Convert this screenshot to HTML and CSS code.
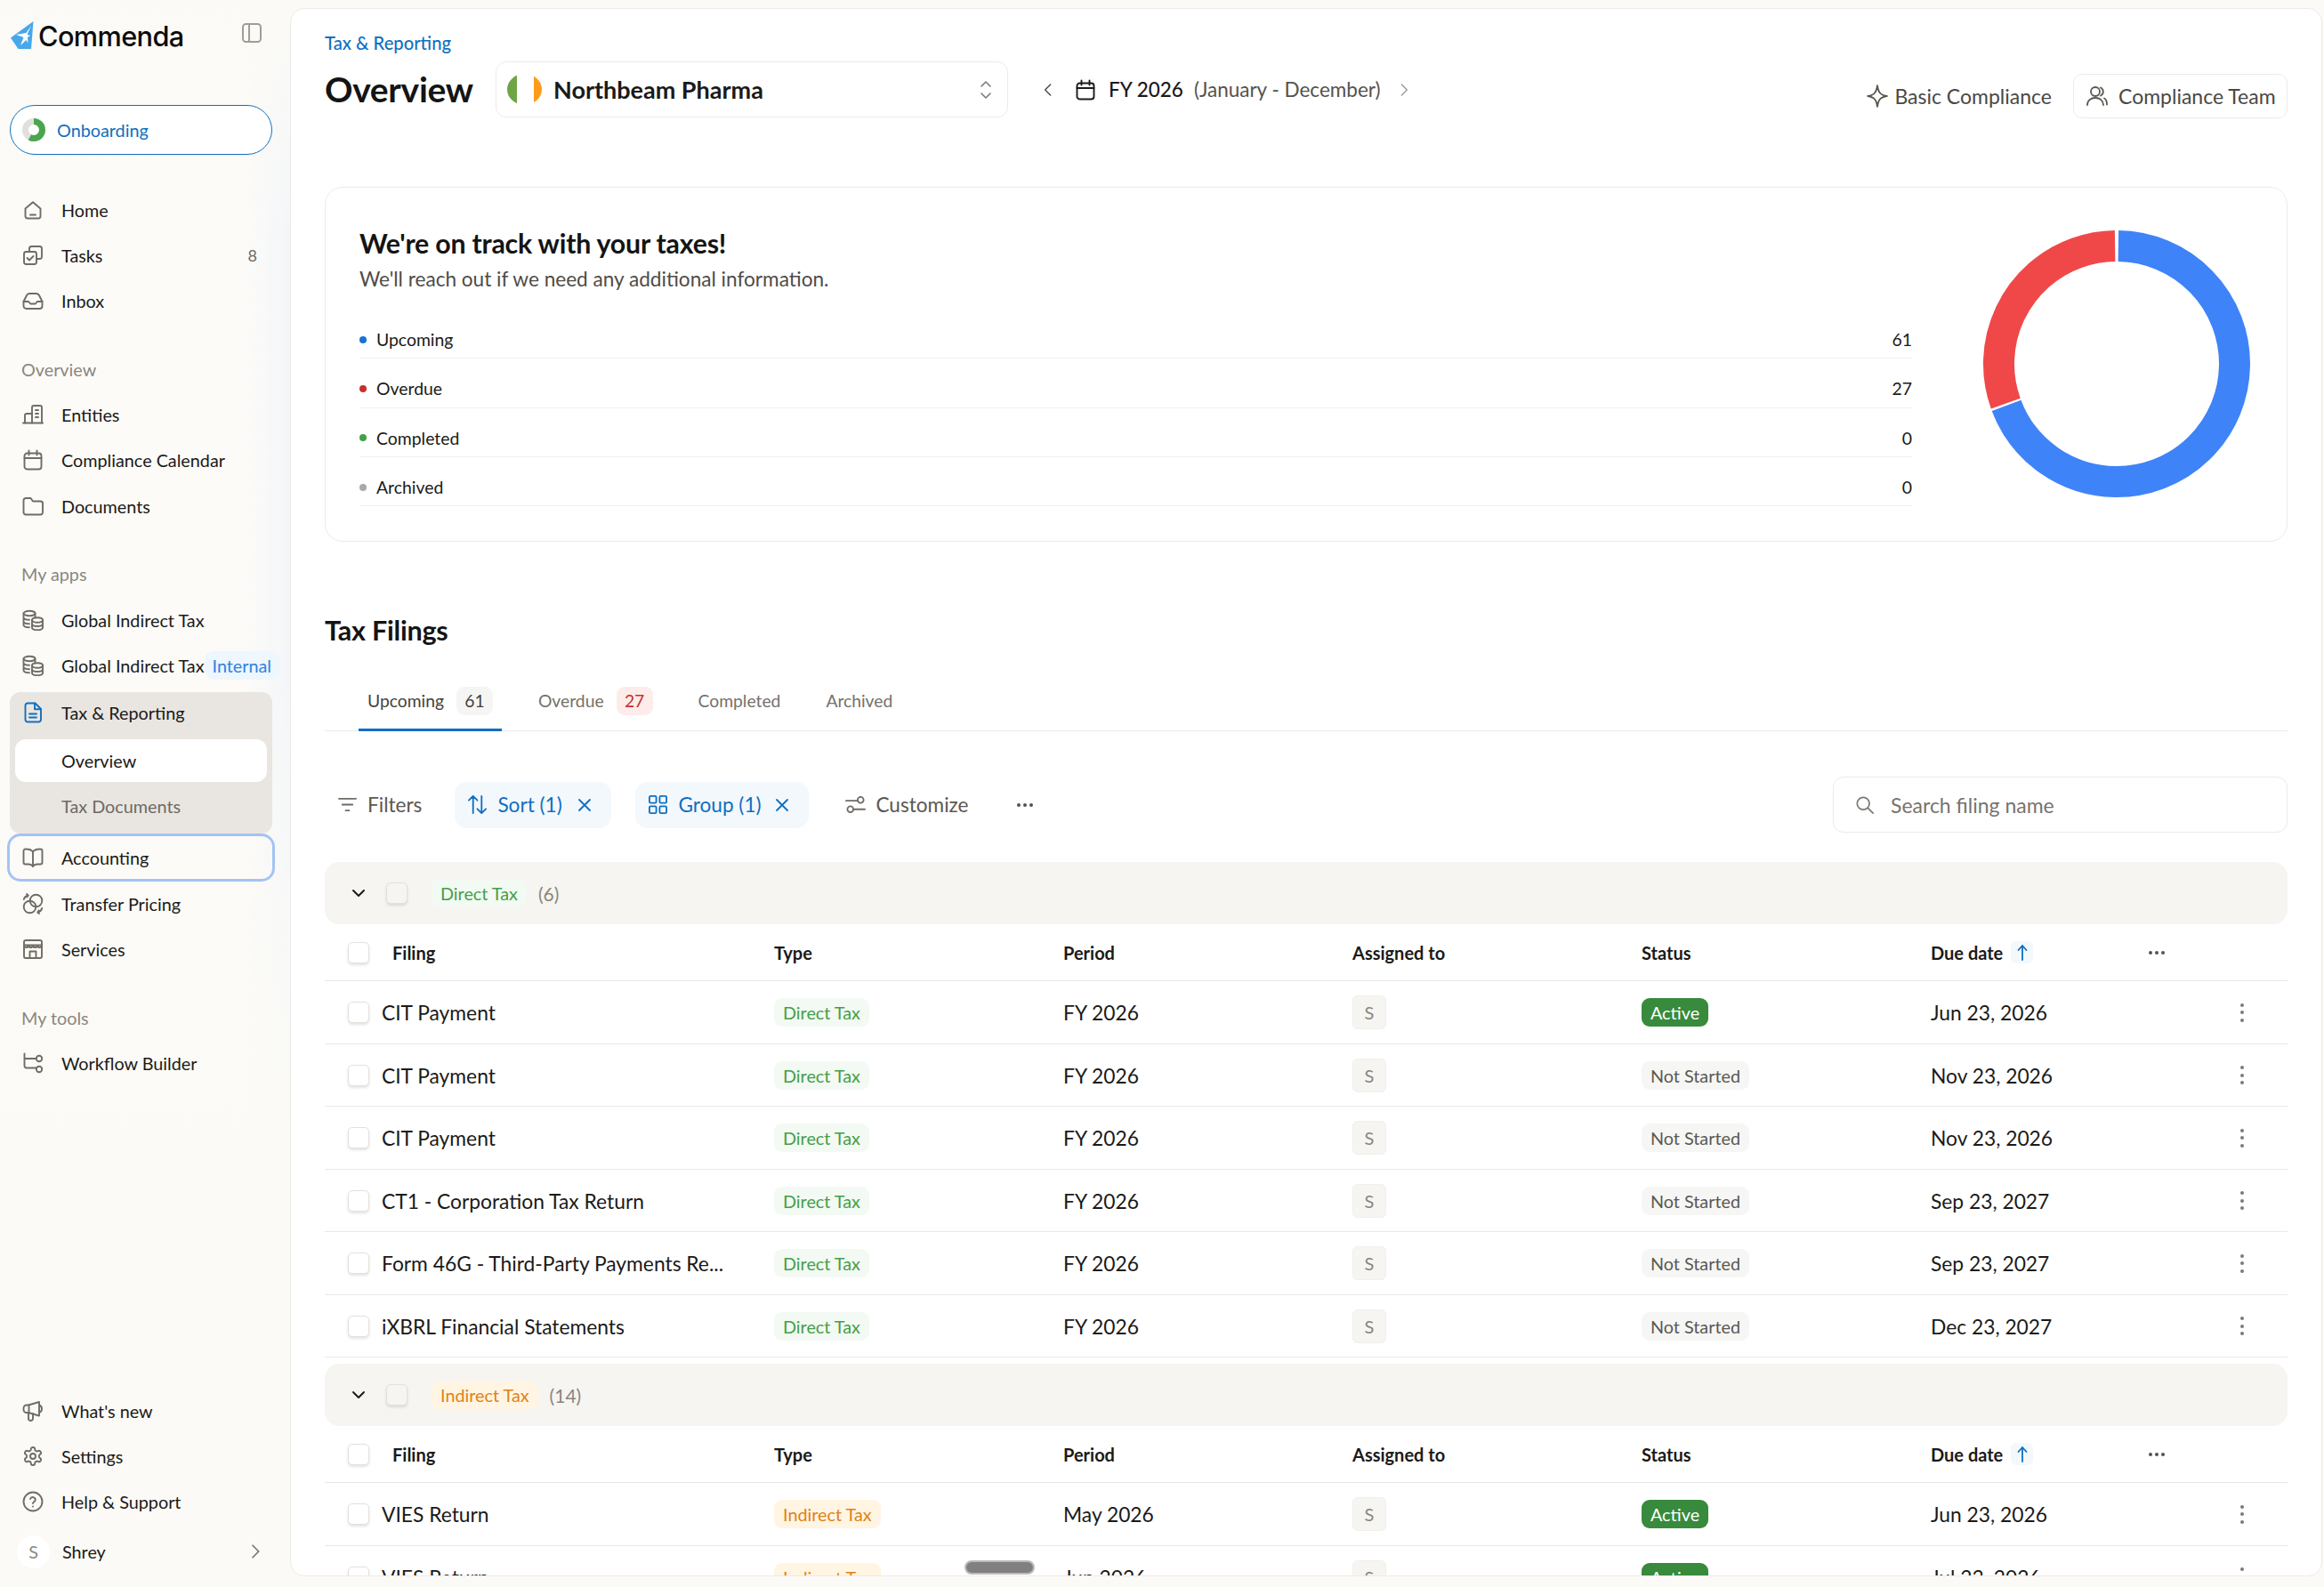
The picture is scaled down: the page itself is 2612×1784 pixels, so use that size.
FILE: index.html
```html
<!DOCTYPE html>
<html lang="en">
<head>
<meta charset="utf-8">
<title>Commenda - Tax &amp; Reporting</title>
<link rel="stylesheet" href="styles.css">
</head>
<body>
<svg class="sprite" xmlns="http://www.w3.org/2000/svg">
  <symbol id="i-home" viewBox="0 0 24 24"><path d="M3.5 10.5 12 3.2l8.500 7.300V19a2.500 2.500 0 0 1-2.500 2.500H6A2.500 2.500 0 0 1 3.500 19z"/><path d="M9 17.500h6"/></symbol>
  <symbol id="i-tasks" viewBox="0 0 24 24"><rect x="2" y="8" width="14" height="14" rx="2.500"/><path d="M8 8V4.500A2.500 2.500 0 0 1 10.500 2h9A2.500 2.500 0 0 1 22 4.500v9a2.500 2.500 0 0 1-2.500 2.500H16"/><path d="m5.500 15 2.500 2.500 4.500-4.500"/></symbol>
  <symbol id="i-inbox" viewBox="0 0 24 24"><path d="M1.500 13 5 6a3.500 3.500 0 0 1 3-2h8a3.500 3.500 0 0 1 3 2l3.500 7v5a3 3 0 0 1-3 3h-15a3 3 0 0 1-3-3z"/><path d="M1.500 13H7c1 0 1.200 2.500 2.500 2.500h5C15.800 15.500 16 13 17 13h5.500"/></symbol>
  <symbol id="i-entities" viewBox="0 0 24 24"><path d="M1 21.500h22"/><path d="M11 21.500V4a2 2 0 0 1 2-2h7a2 2 0 0 1 2 2v17.500"/><path d="M11 11H5a2 2 0 0 0-2 2v8.500"/><path d="M15 7h3M15 11h3M15 15h3"/></symbol>
  <symbol id="i-cal" viewBox="0 0 24 24"><rect x="2.500" y="4.500" width="19" height="18" rx="3"/><path d="M2.500 10h19M7.500 1.500v5M16.500 1.500v5"/></symbol>
  <symbol id="i-folder" viewBox="0 0 24 24"><path d="M1.500 5.500A2.500 2.500 0 0 1 4 3h5.500l2.500 3.500h8.500A2.500 2.500 0 0 1 23 9v10a2.500 2.500 0 0 1-2.500 2.500H4A2.500 2.500 0 0 1 1.500 19z"/></symbol>
  <symbol id="i-coins" viewBox="0 0 24 24"><ellipse cx="8" cy="4.500" rx="6.500" ry="2.700"/><path d="M1.500 4.500v13c0 1.500 2.500 2.700 6.500 2.700M1.500 9c0 1.500 2.500 2.700 6.500 2.700M1.500 13.500c0 1.500 2.500 2.700 6.500 2.700M14.500 4.500v4"/><ellipse cx="17" cy="12" rx="6" ry="2.700"/><path d="M11 12v8.500c0 1.500 2.500 2.700 6 2.700s6-1.200 6-2.700V12M11 16.300c0 1.500 2.500 2.700 6 2.700s6-1.200 6-2.700"/></symbol>
  <symbol id="i-doc" viewBox="0 0 24 24"><path d="M6 1.500h8.500l6.500 6.500v12a2.500 2.500 0 0 1-2.500 2.500h-12A2.500 2.500 0 0 1 3.500 20V4A2.500 2.500 0 0 1 6 1.500z"/><path d="M14 1.500v6.800h7M8 13.500h8M8 17.500h8"/></symbol>
  <symbol id="i-book" viewBox="0 0 24 24"><path d="M12 5.500C10.500 3.500 8 2.500 4.500 2.500h-1a2 2 0 0 0-2 2v13a2 2 0 0 0 2 2H7c2.500 0 4 .8 5 2.500 1-1.700 2.500-2.500 5-2.500h3.500a2 2 0 0 0 2-2v-13a2 2 0 0 0-2-2h-1C16 2.500 13.500 3.500 12 5.500z"/><path d="M12 5.500V22"/></symbol>
  <symbol id="i-transfer" viewBox="0 0 24 24"><circle cx="8.500" cy="15.500" r="6.800"/><circle cx="15.500" cy="8.500" r="6.800"/><path d="M1.800 7C2.500 4.500 4 3 6.500 2.500M5 1l1.800 1.500L5.300 4.500M22.200 17c-.7 2.500-2.200 4-4.700 4.500M19 23l-1.800-1.500 1.500-2"/></symbol>
  <symbol id="i-store" viewBox="0 0 24 24"><rect x="2" y="2" width="20" height="20" rx="2"/><path d="M2 7.500h20M2 7.500c0 3.500 4.500 3.500 5 0 .5 3.500 4.500 3.500 5 0 .5 3.500 4.500 3.500 5 0 .5 3.500 5 3.500 5 0M8.500 22v-7.500h7V22"/></symbol>
  <symbol id="i-flow" viewBox="0 0 24 24"><path d="M2.500 1.500V15a2.500 2.500 0 0 0 2.500 2.500h11M2.500 7H15"/><circle cx="19" cy="7" r="3.200"/><circle cx="19" cy="19" r="3.200"/></symbol>
  <symbol id="i-mega" viewBox="0 0 24 24"><path d="M19 2 7 5.500H5A3.500 3.500 0 0 0 1.500 9v1.500A3.500 3.500 0 0 0 5 14h2l12 3.500z"/><path d="M19 5.500a4.500 4.500 0 0 1 0 8.500M7 14v6.500a2.500 2.500 0 0 0 5 0V15"/><path d="M7.500 5.500V14"/></symbol>
  <symbol id="i-gear" viewBox="0 0 24 24"><path d="M12.220 2h-.44a2 2 0 0 0-2 2v.18a2 2 0 0 1-1 1.730l-.43.250a2 2 0 0 1-2 0l-.15-.08a2 2 0 0 0-2.730.730l-.22.380a2 2 0 0 0 .730 2.730l.15.100a2 2 0 0 1 1 1.720v.510a2 2 0 0 1-1 1.740l-.15.090a2 2 0 0 0-.730 2.730l.22.380a2 2 0 0 0 2.730.730l.15-.08a2 2 0 0 1 2 0l.43.250a2 2 0 0 1 1 1.730V20a2 2 0 0 0 2 2h.44a2 2 0 0 0 2-2v-.18a2 2 0 0 1 1-1.730l.43-.25a2 2 0 0 1 2 0l.15.08a2 2 0 0 0 2.730-.73l.22-.39a2 2 0 0 0-.73-2.730l-.15-.08a2 2 0 0 1-1-1.740v-.5a2 2 0 0 1 1-1.740l.15-.09a2 2 0 0 0 .73-2.730l-.22-.38a2 2 0 0 0-2.730-.73l-.15.08a2 2 0 0 1-2 0l-.43-.25a2 2 0 0 1-1-1.730V4a2 2 0 0 0-2-2z"/><circle cx="12" cy="12" r="3"/></symbol>
  <symbol id="i-help" viewBox="0 0 24 24"><circle cx="12" cy="12" r="10.500"/><path d="M9 9a3 3 0 0 1 5.800 1c0 2-2.800 2.500-2.800 4"/><path d="M12 17.500h.01"/></symbol>
  <symbol id="i-x" viewBox="0 0 24 24"><path d="M4 4l16 16M20 4 4 20"/></symbol>
  <symbol id="i-chev-d" viewBox="0 0 24 24"><path d="m4 8 8 8 8-8"/></symbol>
  <symbol id="i-chev-l" viewBox="0 0 24 24"><path d="m16 3-9 9 9 9"/></symbol>
  <symbol id="i-chev-r" viewBox="0 0 24 24"><path d="m8 3 9 9-9 9"/></symbol>
</svg>

<div class="app">
  <aside class="sidebar">
    <div class="brand">
      <svg class="logo" viewBox="0 0 26 32"><path fill="#46a7ea" d="M25.500 0 0 18.500 8.500 31h14.500z"/><path fill="#fff" d="M23 5 17.500 13 6 15l8.500 3L11 27l6.500-6 2 3.500-.5-6.500 3-2-3.500-1z"/></svg>
      <span class="brand-name">Commenda</span>
      <svg class="collapse" viewBox="0 0 22 22"><rect x="1" y="1" width="20" height="20" rx="3.500"/><path d="M8 1v20"/></svg>
    </div>
    <div class="onboarding">
      <svg class="ring" viewBox="0 0 26 26"><circle cx="13" cy="13" r="9.500" class="ring-bg"/><circle cx="13" cy="13" r="9.500" class="ring-fg" pathLength="100" stroke-dasharray="58 100" transform="rotate(-90 13 13)"/></svg>
      <span>Onboarding</span>
    </div>

    <nav class="nav nav-main">
      <a class="item"><svg class="ico"><use href="#i-home"/></svg><span>Home</span></a>
      <a class="item"><svg class="ico"><use href="#i-tasks"/></svg><span>Tasks</span><em class="count">8</em></a>
      <a class="item"><svg class="ico"><use href="#i-inbox"/></svg><span>Inbox</span></a>

      <div class="section">Overview</div>
      <a class="item"><svg class="ico"><use href="#i-entities"/></svg><span>Entities</span></a>
      <a class="item"><svg class="ico"><use href="#i-cal"/></svg><span>Compliance Calendar</span></a>
      <a class="item"><svg class="ico"><use href="#i-folder"/></svg><span>Documents</span></a>

      <div class="section">My apps</div>
      <a class="item"><svg class="ico"><use href="#i-coins"/></svg><span>Global Indirect Tax</span></a>
      <a class="item"><svg class="ico"><use href="#i-coins"/></svg><span>Global Indirect Tax</span><b class="chip-internal">Internal</b></a>
      <div class="expanded">
        <a class="item item-head"><svg class="ico ico-blue"><use href="#i-doc"/></svg><span>Tax &amp; Reporting</span></a>
        <a class="sub sub-on">Overview</a>
        <a class="sub">Tax Documents</a>
      </div>
      <a class="item item-focus"><svg class="ico"><use href="#i-book"/></svg><span>Accounting</span></a>
      <a class="item"><svg class="ico"><use href="#i-transfer"/></svg><span>Transfer Pricing</span></a>
      <a class="item"><svg class="ico"><use href="#i-store"/></svg><span>Services</span></a>

      <div class="section">My tools</div>
      <a class="item"><svg class="ico"><use href="#i-flow"/></svg><span>Workflow Builder</span></a>
    </nav>

    <nav class="nav nav-foot">
      <a class="item"><svg class="ico"><use href="#i-mega"/></svg><span>What's new</span></a>
      <a class="item"><svg class="ico"><use href="#i-gear"/></svg><span>Settings</span></a>
      <a class="item"><svg class="ico"><use href="#i-help"/></svg><span>Help &amp; Support</span></a>
      <a class="item item-user"><i class="avatar">S</i><span>Shrey</span><svg class="user-chev"><use href="#i-chev-r"/></svg></a>
    </nav>
  </aside>

  <main class="panel">
    <div class="crumb">Tax &amp; Reporting</div>
    <header class="title-row">
      <h1>Overview</h1>
      <div class="select">
        <i class="flag"></i>
        <span class="select-name">Northbeam Pharma</span>
        <svg class="updown" viewBox="0 0 14 24"><path d="m2 8 5-5 5 5M2 16l5 5 5-5"/></svg>
      </div>
      <div class="datenav">
        <svg class="dn-chev"><use href="#i-chev-l"/></svg>
        <svg class="dn-cal"><use href="#i-cal"/></svg>
        <span class="dn-fy">FY 2026</span>
        <span class="dn-range">(January - December)</span>
        <svg class="dn-chev dn-chev-r"><use href="#i-chev-r"/></svg>
      </div>
      <div class="actions">
        <span class="plan"><svg class="plan-ico" viewBox="0 0 24 24"><path d="M12 1c1 7 3 10 10 11-7 1-9 4-10 11-1-7-3-10-10-11 7-1 9-4 10-11z"/></svg>Basic Compliance</span>
        <span class="team"><svg class="team-ico" viewBox="0 0 24 24"><circle cx="10" cy="7" r="5"/><path d="M1 22c0-5 4-8 9-8s9 3 9 8M16 2.500a5 5 0 0 1 0 9M20 14.500c2 1 3 4 3 7"/></svg>Compliance Team</span>
      </div>
    </header>

    <section class="card">
      <div class="card-left">
        <h2>We're on track with your taxes!</h2>
        <p>We'll reach out if we need any additional information.</p>
        <ul class="stats">
          <li><i class="dot dot-blue"></i><span>Upcoming</span><b>61</b></li>
          <li><i class="dot dot-red"></i><span>Overdue</span><b>27</b></li>
          <li><i class="dot dot-green"></i><span>Completed</span><b>0</b></li>
          <li><i class="dot dot-gray"></i><span>Archived</span><b>0</b></li>
        </ul>
      </div>
      <svg class="donut" viewBox="0 0 300 300">
        <circle cx="150" cy="150" r="132.500" class="arc arc-blue" pathLength="360" stroke-dasharray="248.500 111.500" transform="rotate(-89.200 150 150)"/>
        <circle cx="150" cy="150" r="132.500" class="arc arc-red" pathLength="360" stroke-dasharray="108.900 251.100" transform="rotate(160.300 150 150)"/>
      </svg>
    </section>

    <h3 class="filings-title">Tax Filings</h3>
    <div class="tabs">
      <a class="tab tab-on">Upcoming<b class="tab-pill">61</b></a>
      <a class="tab">Overdue<b class="tab-pill tab-pill-red">27</b></a>
      <a class="tab">Completed</a>
      <a class="tab">Archived</a>
    </div>

    <div class="toolbar">
      <span class="tool tool-filter"><svg class="tool-ico" viewBox="0 0 24 24"><path d="M2 5h20M6 12h12M10 19h4"/></svg>Filters</span>
      <span class="tool tool-on tool-sort"><svg class="tool-ico" viewBox="0 0 24 24"><path d="M7 22V2M2 7l5-5 5 5M17 2v20M12 17l5 5 5-5"/></svg>Sort (1)<svg class="tool-x"><use href="#i-x"/></svg></span>
      <span class="tool tool-on tool-group"><svg class="tool-ico" viewBox="0 0 24 24"><rect x="2" y="2" width="8" height="8" rx="1.500"/><rect x="14" y="2" width="8" height="8" rx="1.500"/><rect x="2" y="14" width="8" height="8" rx="1.500"/><rect x="14" y="14" width="8" height="8" rx="1.500"/></svg>Group (1)<svg class="tool-x"><use href="#i-x"/></svg></span>
      <span class="tool tool-custom"><svg class="tool-ico" viewBox="0 0 24 24"><circle cx="18" cy="6.500" r="3.500"/><circle cx="6" cy="17.500" r="3.500"/><path d="M1 7.500h13M10 17.500h13"/></svg>Customize</span>
      <span class="dots tool-more"><i></i><i></i><i></i></span>
      <label class="search"><svg class="search-ico" viewBox="0 0 24 24"><circle cx="10" cy="10" r="7.500"/><path d="m16 16 6 6"/></svg>Search filing name</label>
    </div>

    <div class="group">
      <div class="group-head">
        <svg class="group-chev"><use href="#i-chev-d"/></svg>
        <i class="check check-group"></i>
        <span class="tag tag-green group-tag">Direct Tax</span>
        <span class="group-count">(6)</span>
      </div>
      <div class="row row-head">
        <div class="cell-name"><i class="check"></i><span class="head-filing">Filing</span></div>
        <div>Type</div><div>Period</div><div>Assigned to</div><div>Status</div>
        <div class="cell-due">Due date<span class="sort-up"><svg viewBox="0 0 12 20"><path d="M6 18V2M1.500 7 6 2l4.500 5"/></svg></span></div>
        <div class="dots"><i></i><i></i><i></i></div>
      </div>
      <div class="row">
        <div class="cell-name"><i class="check"></i><span>CIT Payment</span></div>
        <div><span class="tag tag-green">Direct Tax</span></div><div>FY 2026</div><div><span class="assignee">S</span></div>
        <div><span class="tag tag-active">Active</span></div><div>Jun 23, 2026</div><div class="kebab"><i></i><i></i><i></i></div>
      </div>
      <div class="row">
        <div class="cell-name"><i class="check"></i><span>CIT Payment</span></div>
        <div><span class="tag tag-green">Direct Tax</span></div><div>FY 2026</div><div><span class="assignee">S</span></div>
        <div><span class="tag tag-idle">Not Started</span></div><div>Nov 23, 2026</div><div class="kebab"><i></i><i></i><i></i></div>
      </div>
      <div class="row">
        <div class="cell-name"><i class="check"></i><span>CIT Payment</span></div>
        <div><span class="tag tag-green">Direct Tax</span></div><div>FY 2026</div><div><span class="assignee">S</span></div>
        <div><span class="tag tag-idle">Not Started</span></div><div>Nov 23, 2026</div><div class="kebab"><i></i><i></i><i></i></div>
      </div>
      <div class="row">
        <div class="cell-name"><i class="check"></i><span>CT1 - Corporation Tax Return</span></div>
        <div><span class="tag tag-green">Direct Tax</span></div><div>FY 2026</div><div><span class="assignee">S</span></div>
        <div><span class="tag tag-idle">Not Started</span></div><div>Sep 23, 2027</div><div class="kebab"><i></i><i></i><i></i></div>
      </div>
      <div class="row">
        <div class="cell-name"><i class="check"></i><span>Form 46G - Third-Party Payments Re...</span></div>
        <div><span class="tag tag-green">Direct Tax</span></div><div>FY 2026</div><div><span class="assignee">S</span></div>
        <div><span class="tag tag-idle">Not Started</span></div><div>Sep 23, 2027</div><div class="kebab"><i></i><i></i><i></i></div>
      </div>
      <div class="row">
        <div class="cell-name"><i class="check"></i><span>iXBRL Financial Statements</span></div>
        <div><span class="tag tag-green">Direct Tax</span></div><div>FY 2026</div><div><span class="assignee">S</span></div>
        <div><span class="tag tag-idle">Not Started</span></div><div>Dec 23, 2027</div><div class="kebab"><i></i><i></i><i></i></div>
      </div>
    </div>

    <div class="group">
      <div class="group-head">
        <svg class="group-chev"><use href="#i-chev-d"/></svg>
        <i class="check check-group"></i>
        <span class="tag tag-orange group-tag">Indirect Tax</span>
        <span class="group-count">(14)</span>
      </div>
      <div class="row row-head">
        <div class="cell-name"><i class="check"></i><span class="head-filing">Filing</span></div>
        <div>Type</div><div>Period</div><div>Assigned to</div><div>Status</div>
        <div class="cell-due">Due date<span class="sort-up"><svg viewBox="0 0 12 20"><path d="M6 18V2M1.500 7 6 2l4.500 5"/></svg></span></div>
        <div class="dots"><i></i><i></i><i></i></div>
      </div>
      <div class="row">
        <div class="cell-name"><i class="check"></i><span>VIES Return</span></div>
        <div><span class="tag tag-orange">Indirect Tax</span></div><div>May 2026</div><div><span class="assignee">S</span></div>
        <div><span class="tag tag-active">Active</span></div><div>Jun 23, 2026</div><div class="kebab"><i></i><i></i><i></i></div>
      </div>
      <div class="row">
        <div class="cell-name"><i class="check"></i><span>VIES Return</span></div>
        <div><span class="tag tag-orange">Indirect Tax</span></div><div>Jun 2026</div><div><span class="assignee">S</span></div>
        <div><span class="tag tag-active">Active</span></div><div>Jul 23, 2026</div><div class="kebab"><i></i><i></i><i></i></div>
      </div>
    </div>
  </main>
  <div class="scroll-pill"></div>
</div>
</body>
</html>
```

FILE: styles.css
```css
* { box-sizing: border-box; }
html, body { margin: 0; height: 100%; }
body {
  width: 2612px;
  height: 1784px;
  overflow: hidden;
  background: #fbfaf6;
  color: #1b1a18;
  font-family: "Lato", "Noto Sans", sans-serif;
  font-size: 19.8px;
}
i, em { font-style: normal; }
.sprite { display: none; }
.app { display: flex; height: 1784px; position: relative; }

/* sidebar */
.sidebar {
  width: 326px;
  flex: none;
  display: flex;
  flex-direction: column;
  padding-bottom: 12px;
  background:
    linear-gradient(180deg, #fbfaf6 0, rgba(251,250,246,0) 15%, rgba(251,250,246,0) 42%, #fbfaf6 72%),
    linear-gradient(90deg, #fcfbf8 84%, #f3f6f9 100%);
}
.brand { display: flex; align-items: center; height: 36px; margin: 22px 0 0 12px; }
.logo { width: 26px; height: 32px; flex: none; }
.brand-name { font-family: "Inter", sans-serif; font-weight: 500; font-size: 30.7px; letter-spacing: -.6px; color: #0c0c0c; margin-left: 5px; }
.collapse { width: 22px; height: 22px; margin-left: auto; margin-right: 32px; margin-top: -6px; fill: none; stroke: #a19d96; stroke-width: 2; }
.onboarding {
  margin: 60px 20px 0 11px;
  height: 56px;
  border: 1.5px solid #1270bd;
  border-radius: 28px;
  background: #fff;
  display: flex;
  align-items: center;
  padding-left: 13px;
  color: #0f6fc0;
}
.ring { width: 26px; height: 26px; margin-right: 13px; fill: none; stroke-width: 7; }
.ring-bg { stroke: #e0e0de; }
.ring-fg { stroke: #4aa64e; }

.nav { display: flex; flex-direction: column; }
.nav-main { margin-top: 36px; }
.nav-foot { margin-top: auto; }
.item {
  height: 51.2px;
  flex: none;
  display: flex;
  align-items: center;
  padding-left: 25px;
  padding-right: 37px;
  color: #1b1a18;
  white-space: nowrap;
}
.ico { width: 24px; height: 24px; margin-right: 20px; flex: none; fill: none; stroke: #716c65; stroke-width: 1.9; stroke-linecap: round; stroke-linejoin: round; }
.ico-blue { stroke: #1270bd; }
.count { margin-left: auto; color: #6f6b65; font-size: 18px; }
.section { height: 52px; margin-top: 25px; padding-left: 24px; display: flex; align-items: center; color: #8b8780; }
.chip-internal {
  flex: none;
  font-weight: 400;
  margin-left: auto;
  margin-right: -23px;
  padding: 0 9px;
  height: 32px;
  line-height: 32px;
  border-radius: 10px;
  background: #eef6fe;
  color: #2a84e0;
}
.expanded { margin: 4px 20px 0 11px; height: 159px; background: #e9e6e1; border-radius: 12px; padding: 0 6px; }
.item-head { height: 46px; padding-left: 14px; padding-right: 0; margin: 0 -6px; }
.sub { display: flex; align-items: center; height: 48px; padding-left: 52px; color: #1b1a18; }
.sub + .sub { margin-top: 3px; color: #6e6a64; }
.sub-on { margin-top: 7px; background: #fff; border-radius: 12px; }
.item-focus {
  height: 48px;
  margin: 3px 20px 3px 11px;
  padding-left: 14px;
  border-radius: 12px;
  box-shadow: 0 0 0 3px #a4c3f4;
}
.item-user { height: 56px; margin-top: 2px; padding-left: 19px; }
.avatar {
  width: 37px; height: 37px; border-radius: 50%;
  background: #fff;
  color: #8a8a86;
  display: flex; align-items: center; justify-content: center;
  margin-right: 14px;
  flex: none;
}
.user-chev { width: 18px; height: 18px; margin-left: auto; margin-right: -7px; fill: none; stroke: #77736c; stroke-width: 2.200; stroke-linecap: round; stroke-linejoin: round; }

/* main panel */
.panel {
  flex: 1;
  height: 1763px;
  margin: 9px 2px 0 0;
  padding: 0 38px 0 38px;
  background: #fff;
  border: 1px solid #ecebe8;
  border-radius: 16px;
  overflow: hidden;
}
.crumb { margin-top: 26px; height: 24px; line-height: 24px; font-size: 20.2px; font-weight: 500; color: #0f6fc0; }
.title-row { display: flex; align-items: flex-start; margin-top: 9px; height: 63px; }
h1 { margin: 0; width: 192px; flex: none; font-size: 39px; line-height: 63px; font-weight: 700; color: #141414; letter-spacing: -.3px; }
.select {
  width: 576px; height: 63px; flex: none;
  border: 1px solid #ebebe9; border-radius: 12px;
  display: flex; align-items: center;
  padding: 0 17px 0 12px;
}
.flag { width: 39px; height: 35px; border-radius: 50%; flex: none; background: linear-gradient(90deg, #6ea544 28%, #fff 28% 77%, #ff9b1a 77%); }
.select-name { margin-left: 13px; font-size: 27px; font-weight: 700; color: #1a1a1a; }
.updown { width: 14px; height: 24px; margin-left: auto; fill: none; stroke: #7d7a74; stroke-width: 1.600; stroke-linecap: round; stroke-linejoin: round; }
.datenav { display: flex; align-items: center; height: 63px; margin-left: 37px; font-size: 22.5px; }
.dn-chev { width: 16px; height: 18px; fill: none; stroke: #4f4c47; stroke-width: 2.200; stroke-linecap: round; stroke-linejoin: round; }
.dn-chev-r { stroke: #a09d96; margin-left: 18px; }
.dn-cal { width: 24px; height: 24px; margin: 0 14px 0 22px; fill: none; stroke: #1b1a18; stroke-width: 1.900; stroke-linecap: round; }
.dn-fy { color: #1b1a18; font-weight: 500; }
.dn-range { margin-left: 12px; color: #55524d; }
.actions { margin-left: auto; display: flex; align-items: center; margin-top: 14px; height: 50px; font-size: 23px; color: #4b4843; }
.plan { display: flex; align-items: center; }
.plan-ico { width: 26px; height: 26px; margin-right: 6px; fill: none; stroke: #5a5751; stroke-width: 1.700; stroke-linejoin: round; }
.team { display: flex; align-items: center; height: 50px; margin-left: 24px; padding: 0 12px 0 14px; width: 241px; border: 1px solid #ebebe9; border-radius: 10px; }
.team-ico { width: 24px; height: 24px; margin-right: 12px; fill: none; stroke: #5a5751; stroke-width: 1.800; stroke-linecap: round; }

/* summary card */
.card { display: flex; align-items: flex-start; height: 399px; margin-top: 78px; padding: 44px 41px 0 38px; border: 1px solid #ecebe8; border-radius: 20px; }
.card-left { flex: 1; min-width: 0; margin-right: 2px; }
h2 { margin: 0; height: 36px; line-height: 36px; font-size: 30.3px; font-weight: 700; color: #141414; letter-spacing: -.2px; }
.card-left p { margin: 8px 0 0; height: 30px; line-height: 30px; font-size: 22.6px; color: #4f4c47; }
.stats { list-style: none; margin: 19px 0 0; padding: 0; font-size: 19.4px; }
.stats li { display: flex; align-items: center; height: 55.3px; padding-top: 13px; border-bottom: 1px solid #f0f0ee; }
.stats span { flex: 1; }
.stats b { font-weight: 400; color: #1b1a18; }
.dot { width: 8px; height: 8px; border-radius: 50%; margin: 0 11px 0 0; flex: none; }
.dot-blue { background: #1774d1; }
.dot-red { background: #c9302c; }
.dot-green { background: #43a047; }
.dot-gray { background: #aaa9a5; }
.donut { width: 300px; height: 300px; flex: none; margin: 4px 0 0 78px; }
.arc { fill: none; stroke-width: 35; }
.arc-blue { stroke: #3f83f8; }
.arc-red { stroke: #f04848; }

/* filings */
.filings-title { margin: 79px 0 0; height: 40px; line-height: 40px; font-size: 30.5px; font-weight: 700; color: #141414; letter-spacing: -.2px; }
.tabs { display: flex; gap: 31px; margin-top: 29px; padding-left: 38px; height: 65px; border-bottom: 1px solid #e9e9e7; font-size: 19.3px; }
.tab { display: flex; align-items: center; height: 65px; padding: 0 10px 1px; border-bottom: 3px solid transparent; color: #75716b; }
.tab-on { color: #45423d; border-bottom-color: #0f6fc0; }
.tab-pill { font-weight: 400; height: 32px; min-width: 41px; line-height: 32px; margin-left: 14px; text-align: center; border-radius: 9px; background: #f5f5f3; color: #45423d; }
.tab-pill-red { background: #fdecea; color: #c9302c; }

.toolbar { display: flex; align-items: center; height: 63px; margin-top: 51px; font-size: 22.6px; color: #5b5852; }
.tool { display: flex; align-items: center; height: 52px; white-space: nowrap; }
.tool-ico { width: 23px; height: 23px; margin-right: 11px; fill: none; stroke: currentColor; stroke-width: 1.900; stroke-linecap: round; stroke-linejoin: round; }
.tool-filter { margin-left: 14px; }
.tool-filter .tool-ico, .tool-custom .tool-ico { stroke: #6f6b65; }
.tool-on { background: #f3f8fd; color: #0f6fc0; border-radius: 14px; padding: 0 21px 0 14px; }
.tool-sort { margin-left: 37px; width: 176px; }
.tool-group { margin-left: 27px; width: 195px; }
.tool-x { width: 18px; height: 18px; margin-left: auto; fill: none; stroke: currentColor; stroke-width: 2.400; stroke-linecap: round; }
.tool-custom { margin-left: 41px; }
.tool-more { margin-left: 54px; }
.search {
  margin-left: auto; width: 511px; height: 63px;
  display: flex; align-items: center;
  padding-left: 24px;
  border: 1px solid #ebebe9; border-radius: 12px;
  color: #77736d;
  font-size: 23px;
}
.search-ico { width: 22px; height: 22px; margin-right: 18px; fill: none; stroke: #7d7a74; stroke-width: 1.900; stroke-linecap: round; }

.group { margin-bottom: 7px; }
.toolbar + .group { margin-top: 33px; }
.group-head { display: flex; align-items: center; height: 70px; background: #f6f5f1; border-radius: 16px; padding-left: 29px; color: #8a8680; }
.group-chev { width: 18px; height: 18px; flex: none; fill: none; stroke: #1b1a18; stroke-width: 2.600; stroke-linecap: round; stroke-linejoin: round; }
.check { display: block; width: 24px; height: 24px; flex: none; border-radius: 5px; background: #fff; border: 1px solid #e4e1dc; box-shadow: 0 2px 3px rgba(90,80,70,.16); }
.check-group { background: #f6f5f1; margin-left: 22px; }
.group-tag { margin-left: 27px; }
.group-count { margin-left: 13px; font-size: 21px; }

.row {
  display: grid;
  grid-template-columns: 505px 325px 325px 325px 325px 245px 1fr;
  align-items: center;
  height: 70.5px;
  padding-top: 1px;
  border-bottom: 1px solid #e8e8e6;
  font-size: 22.8px;
  color: #1b1a18;
}
.row-head { height: 64px; padding-top: 0; font-size: 20px; font-weight: 700; color: #1b1a18; }
.cell-name { display: flex; align-items: center; padding-left: 26px; }
.cell-name > span { margin-left: 14px; white-space: nowrap; }
.cell-name > .head-filing { margin-left: 26px; }
.cell-due { display: flex; align-items: center; }
.sort-up { display: flex; align-items: center; justify-content: center; width: 25px; height: 25px; margin-left: 9px; border-radius: 6px; background: #f3f8fd; }
.sort-up svg { width: 12px; height: 20px; fill: none; stroke: #0f6fc0; stroke-width: 1.800; stroke-linecap: round; stroke-linejoin: round; }
.dots { display: flex; gap: 3px; }
.dots i { width: 4px; height: 4px; border-radius: 50%; background: #55524d; }
.kebab { display: flex; flex-direction: column; gap: 4.500px; padding-left: 103px; }
.kebab i { width: 4px; height: 4px; border-radius: 50%; background: #7d7a74; }
.tag { display: inline-flex; align-items: center; height: 32px; padding: 0 10px; border-radius: 9px; font-size: 19.8px; font-weight: 400; white-space: nowrap; }
.tag-green { background: #f3f9f3; color: #43a047; }
.tag-orange { background: #fff5e2; color: #df8216; }
.tag-active { background: #388a3c; color: #fff; }
.tag-idle { background: #f6f6f5; color: #5b5852; }
.assignee { display: inline-flex; align-items: center; justify-content: center; width: 38px; height: 38px; vertical-align: middle; border-radius: 6px; background: #f6f5f1; border: 1px solid #f0efeb; color: #8a8680; font-size: 20px; }

.scroll-pill { position: absolute; left: 1084px; top: 1754px; width: 79px; height: 16px; border-radius: 8px; background: #808080; border: 2px solid #bbb; }
```
